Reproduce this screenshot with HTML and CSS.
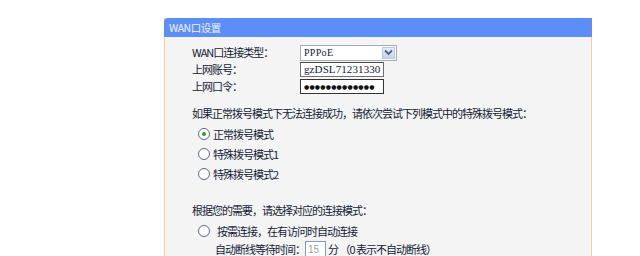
FILE: index.html
```html
<!DOCTYPE html>
<html>
<head>
<meta charset="utf-8">
<link rel="stylesheet" href="styles.css">
</head>
<body>
<div class="page">
  <div class="panel">
    <div class="hd">WAN口设置</div>
    <div class="bd">
      <div class="form">
        <div class="row">
          <span class="lbl">WAN口连接类型：</span>
          <span class="select"><span class="val">PPPoE</span><span class="btn"><svg width="9" height="7" viewBox="0 0 9 7"><path d="M1 1.5 L4.5 5 L8 1.5" fill="none" stroke="#4d6185" stroke-width="1.8"/></svg></span></span>
        </div>
        <div class="row">
          <span class="lbl">上网账号：</span>
          <span class="input">gzDSL71231330</span>
        </div>
        <div class="row">
          <span class="lbl">上网口令：</span>
          <span class="input pwd">●●●●●●●●●●●●●</span>
        </div>
      </div>
      <p class="note">如果正常拨号模式下无法连接成功，请依次尝试下列模式中的特殊拨号模式：</p>
      <div class="opts">
        <div class="opt"><span class="radio on"></span>正常拨号模式</div>
        <div class="opt"><span class="radio"></span>特殊拨号模式1</div>
        <div class="opt"><span class="radio"></span>特殊拨号模式2</div>
      </div>
      <p class="note note2">根据您的需要，请选择对应的连接模式：</p>
      <div class="opt opt-b"><span class="radio"></span>按需连接，在有访问时自动连接</div>
      <div class="sub">自动断线等待时间：<span class="num">15</span>分 （0 表示不自动断线）</div>
    </div>
  </div>
</div>
</body>
</html>
```
FILE: styles.css
```css
html, body {
  margin: 0;
  padding: 0;
  background: #ffffff;
  overflow: hidden;
}
body {
  width: 640px;
  height: 256px;
  font-family: "Noto Sans CJK SC", "DejaVu Sans", sans-serif;
  font-size: 11px;
  color: #141a34;
}
.page {
  padding: 18px 0 0 164px;
}
.panel {
  width: 426px;
  height: 260px;
  border-left: 1px solid #f1cf9f;
  border-right: 1px solid #f1cf9f;
  background: #f4f4f4;
}
.hd {
  height: 19px;
  margin: 0 -1px;
  background: #5b8ff6;
  border-radius: 4px 0 0 0;
  color: #eef2ff;
  font-size: 10.5px;
  line-height: 19px;
  padding-left: 5px;
  letter-spacing: -0.5px;
}
.bd {
  padding: 8px 0 0 27px;
  letter-spacing: -1px;
}
.form {
  display: flex;
  flex-direction: column;
  gap: 2px;
}
.row {
  display: flex;
  align-items: center;
  height: 15px;
}
.lbl {
  width: 108px;
  line-height: 15px;
}
.select {
  width: 95px;
  height: 14px;
  border: 1px solid #a5acb5;
  background: #fff;
  display: flex;
  align-items: center;
  justify-content: space-between;
}
.val {
  font-family: "Liberation Serif", serif;
  font-size: 10px;
  letter-spacing: 0.3px;
  padding-left: 3px;
}
.btn {
  width: 13px;
  height: 12px;
  margin-right: 1px;
  background: linear-gradient(#e4ecfb, #c4d4f1);
  border: 1px solid #b8c8e8;
  box-sizing: border-box;
  display: flex;
  align-items: center;
  justify-content: center;
}
.input {
  width: 79px;
  height: 13px;
  border: 1px solid #707070;
  border-top-color: #4a4a4a;
  background: #fff;
  font-family: "Liberation Serif", serif;
  font-size: 11px;
  letter-spacing: 0.1px;
  line-height: 13px;
  padding-left: 3px;
}
.pwd {
  font-family: "DejaVu Sans", sans-serif;
  font-size: 6px;
  letter-spacing: 0.2px;
  color: #111;
  border-color: #333;
}
.note {
  margin: 12px 0 0 0;
  line-height: 14px;
}
.opts {
  margin-top: 7px;
  display: flex;
  flex-direction: column;
  gap: 6px;
}
.opt {
  display: flex;
  align-items: center;
  height: 14px;
  padding-left: 6px;
}
.radio {
  width: 10px;
  height: 10px;
  border: 1px solid #5a6a82;
  border-radius: 50%;
  background: #fff;
  margin-right: 3px;
  position: relative;
  flex: none;
}
.radio.on::after {
  content: "";
  position: absolute;
  left: 3px;
  top: 3px;
  width: 4px;
  height: 4px;
  border-radius: 50%;
  background: #2f9a3a;
}
.note2 {
  margin-top: 22px;
}
.opt-b {
  margin-top: 7px;
}
.opt-b .radio {
  margin-right: 7px;
}
.sub {
  margin-top: 3px;
  padding-left: 23px;
  display: flex;
  align-items: center;
  height: 16px;
  line-height: 14px;
}
.num {
  display: inline-block;
  width: 17px;
  height: 15px;
  border: 1px solid #8a9ab0;
  background: #fff;
  color: #a0a0a0;
  font-family: "Liberation Sans", sans-serif;
  font-size: 10px;
  line-height: 15px;
  padding-left: 2px;
  margin-right: 2px;
  letter-spacing: 0;
}
```
